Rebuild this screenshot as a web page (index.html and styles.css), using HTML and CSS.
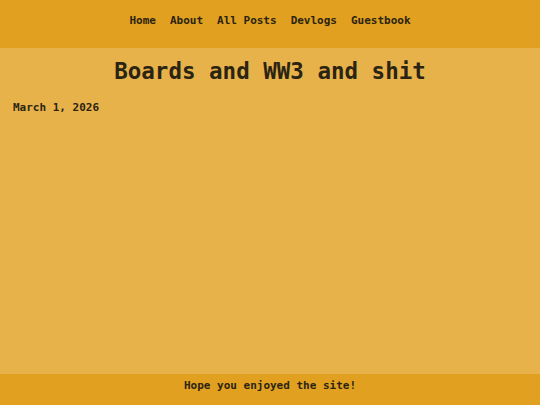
FILE: index.html
```html
<!DOCTYPE html>
<html lang="en">
<head>
<meta charset="utf-8">
<title>Boards and WW3 and shit</title>
<link rel="stylesheet" href="styles.css">
</head>
<body>
<header class="site-header">
  <nav class="nav">
    <a href="#">Home</a>
    <a href="#">About</a>
    <a href="#">All Posts</a>
    <a href="#">Devlogs</a>
    <a href="#">Guestbook</a>
  </nav>
</header>
<main class="content">
  <h1 class="title">Boards and WW3 and shit</h1>
  <p class="date">March 1, 2026</p>
</main>
<footer class="site-footer">
  <p>Hope you enjoyed the site!</p>
</footer>
</body>
</html>
```
FILE: styles.css
```css
html, body {
  margin: 0;
  padding: 0;
  height: 100%;
}
body {
  display: flex;
  flex-direction: column;
  background: #e8b24a;
  color: #2b2412;
  font-family: "DejaVu Sans Mono", "Liberation Mono", monospace;
  font-weight: bold;
}
.site-header {
  background: #e1a020;
  height: 48px;
  display: flex;
  justify-content: center;
  padding-top: 13px;
  box-sizing: border-box;
}
.nav {
  display: flex;
  gap: 14px;
  font-size: 11px;
  line-height: 16px;
}
.nav a {
  color: #2b2412;
  text-decoration: none;
}
.content {
  flex: 1;
  padding: 0 13px;
}
.title {
  margin: 10px 0 0;
  text-align: center;
  font-size: 22.5px;
  line-height: 26px;
}
.date {
  margin: 16px 0 0;
  font-size: 11px;
  line-height: 16px;
}
.site-footer {
  background: #e1a020;
  height: 31px;
  display: flex;
  justify-content: center;
  padding-top: 4px;
  box-sizing: border-box;
}
.site-footer p {
  margin: 0;
  font-size: 11px;
  line-height: 16px;
}
```
